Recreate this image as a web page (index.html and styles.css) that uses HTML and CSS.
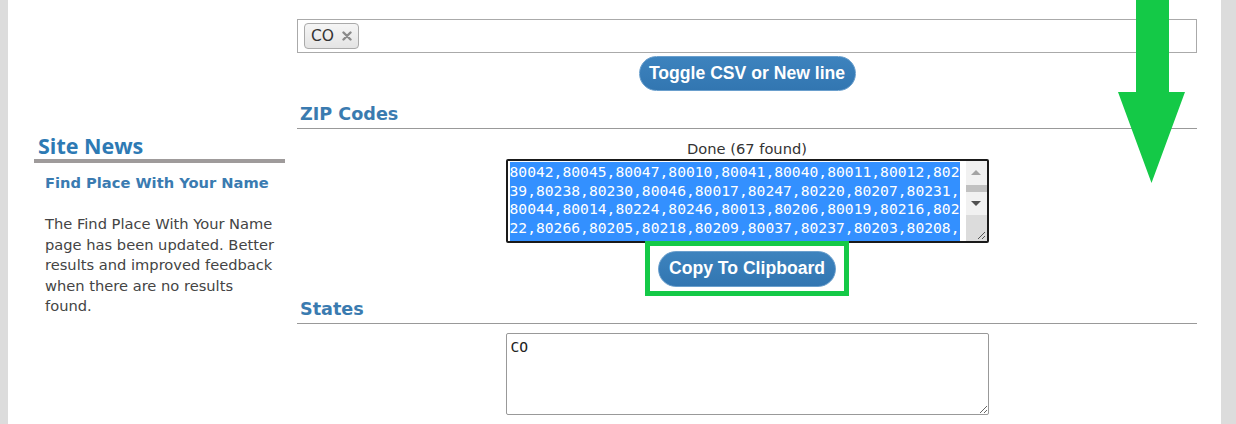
FILE: index.html
```html
<!DOCTYPE html>
<html lang="en">
<head>
<meta charset="utf-8">
<title>ZIP Codes by State</title>
<link rel="stylesheet" href="styles.css">
</head>
<body>
<div class="page">
  <aside class="sidebar">
    <h2 class="side-title">Site News</h2>
    <h3 class="news-title">Find Place With Your Name</h3>
    <p class="news-text">The Find Place With Your Name page has been updated. Better results and improved feedback when there are no results found.</p>
  </aside>
  <main class="main">
    <div class="tagbox"><span class="tag">CO<svg class="tag-x" width="10" height="10" viewBox="0 0 10 10"><path d="M1.5 1.5 L8.5 8.5 M8.5 1.5 L1.5 8.5" stroke="#8a8a8a" stroke-width="2.4" stroke-linecap="round"/></svg></span></div>
    <div class="center"><button class="btn btn-toggle">Toggle CSV or New line</button></div>
    <h2 class="section">ZIP Codes</h2>
    <div class="status">Done (67 found)</div>
    <div class="ta-result">
      <div class="ta-text"><span class="sel">80042,80045,80047,80010,80041,80040,80011,80012,80239,80238,80230,80046,80017,80247,80220,80207,80231,80044,80014,80224,80246,80013,80206,80019,80216,80222,80266,80205,80218,80209,80037,80237,80203,80208,80210,80211,80212,80214,80215,80219,80221,80223,80226,80227,80232,80235,80236,80204,80202,80264,80290,80293,80294,80201,80217,80243,80244,80248,80250,80251,80252,80256,80257,80259,80261,80262,80265</span></div>
      <div class="sbar">
        <div class="sb-btn"><span class="arr-up"></span></div>
        <div class="sb-track"><span class="sb-thumb"></span></div>
        <div class="sb-btn"><span class="arr-down"></span></div>
        <div class="sb-corner"><svg width="10" height="10" viewBox="0 0 10 10"><path d="M9 2 L2 9 M9 6 L6 9" stroke="#555" stroke-width="1" fill="none"/></svg></div>
      </div>
    </div>
    <div class="hl-box"><button class="btn btn-copy">Copy To Clipboard</button></div>
    <h2 class="section section-states">States</h2>
    <textarea class="ta-states" readonly>CO</textarea>
  </main>
  <svg class="arrow" viewBox="0 0 68 184" width="68" height="184"><polygon points="18,0 51,0 51,92 67,92 33.5,183 0,92 18,92" fill="#14c947"/></svg>
</div>
</body>
</html>
```

FILE: styles.css
```css
body {
  margin: 0;
  background: #dcdcdc;
  font-family: "DejaVu Sans", Verdana, sans-serif;
}

.page {
  position: relative;
  margin: 0 15px 0 8px;
  height: 424px;
  background: #fff;
  display: flex;
  padding-left: 26px;
  overflow: hidden;
}

.sidebar {
  width: 251px;
  flex: none;
  padding-top: 134px;
}

.side-title {
  margin: 0;
  padding: 0 0 1px 4px;
  font: 700 21.5px/24px "Open Sans", sans-serif;
  color: #2d7ab4;
  border-bottom: 4px solid #9f9b9b;
}

.news-title {
  margin: 10px 0 0;
  padding-left: 11px;
  font: 700 14.67px/20px "DejaVu Sans", sans-serif;
  color: #3a7bb1;
}

.news-text {
  margin: 21px 0 0;
  padding-left: 11px;
  width: 236px;
  font-size: 14.67px;
  line-height: 20.5px;
  color: #444;
}

.main {
  width: 900px;
  flex: none;
  margin-left: 12px;
  padding-top: 19px;
}

.tagbox {
  height: 34px;
  box-sizing: border-box;
  border: 1px solid #aaa;
  padding: 3px 6px;
}

.tag {
  display: inline-flex;
  align-items: center;
  height: 26px;
  box-sizing: border-box;
  padding: 0 6px 0 6px;
  border: 1px solid #aaa;
  border-radius: 4px;
  background: linear-gradient(#f5f5f5, #e4e4e4);
  font-size: 15.5px;
  color: #333;
}

.tag-x {
  margin-left: 8px;
}

.center {
  text-align: center;
}

.btn {
  padding: 0;
  font: 700 17.6px/1 "Liberation Sans", Arial, sans-serif;
  color: #fff;
  background: linear-gradient(#3d83be, #3276b1);
  border: 1px solid #6a9fcd;
  border-radius: 18px;
}

.btn-toggle {
  width: 217px;
  height: 35px;
  margin-top: 3px;
}

.section {
  margin: 13px 0 0;
  padding: 0 0 3px 3px;
  font: 700 17.6px/21px "DejaVu Sans", sans-serif;
  color: #3a7bb0;
  border-bottom: 1px solid #999;
}

.section-states {
  margin-top: 2.5px;
}

.status {
  margin-top: 10px;
  text-align: center;
  font-size: 14.67px;
  line-height: 20px;
  color: #333;
}

.ta-result {
  width: 483px;
  height: 84px;
  box-sizing: border-box;
  margin: 0 auto;
  display: flex;
  border: 2px solid #1a1a1a;
  border-radius: 2px;
  background: #fff;
}

.ta-text {
  flex: 1;
  padding: 2px 0 0 2px;
  overflow: hidden;
  font: 14.67px/18.7px "DejaVu Sans Mono", monospace;
  word-break: break-all;
  color: #fff;
}

.sel {
  background: #3390ff;
  padding: 1px 0;
}

.sbar {
  width: 21px;
  flex: none;
  display: flex;
  flex-direction: column;
  background: #f1f1f1;
}

.sb-btn {
  height: 23px;
  display: flex;
  align-items: center;
  justify-content: center;
}

.sb-btn:first-child {
  height: 22px;
}

.arr-up {
  border-left: 5px solid transparent;
  border-right: 5px solid transparent;
  border-bottom: 5px solid #a3a3a3;
}

.arr-down {
  border-left: 5px solid transparent;
  border-right: 5px solid transparent;
  border-top: 5px solid #505050;
}

.sb-track {
  height: 9px;
  display: flex;
  align-items: flex-end;
}

.sb-thumb {
  width: 100%;
  height: 7px;
  background: #c1c1c1;
}

.sb-corner {
  flex: 1;
  background: #dcdcdc;
  display: flex;
  align-items: flex-end;
  justify-content: flex-end;
  padding: 0 1px 1px 0;
}

.hl-box {
  width: 204px;
  height: 55px;
  box-sizing: border-box;
  margin: -2px auto 0;
  padding: 5px 8px 4px;
  border: 5px solid #14c947;
}

.btn-copy {
  display: block;
  width: 178px;
  height: 36px;
}

.ta-states {
  display: block;
  width: 483px;
  height: 82px;
  box-sizing: border-box;
  margin: 9px auto 0;
  padding: 4px;
  border: 1px solid #999;
  border-radius: 2px;
  font: 14.67px/18.7px "DejaVu Sans Mono", monospace;
  color: #222;
  resize: both;
  outline: none;
}

.arrow {
  position: absolute;
  left: 1110px;
  top: 0;
}
```
